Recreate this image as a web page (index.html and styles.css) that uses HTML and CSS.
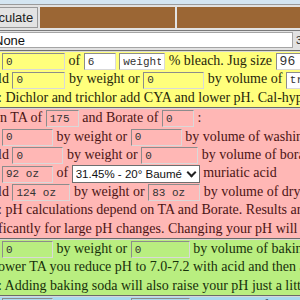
FILE: index.html
```html
<!DOCTYPE html>
<html lang="en">
<head>
<meta charset="UTF-8">
<title>Pool chemical calculator</title>
<link rel="stylesheet" href="styles.css">
</head>
<body>
<div class="page">
    <div class="strip"></div>

    <!-- 按钮和棕色标题栏 -->
    <div class="bar">
        <button class="calc">Calculate</button>
        <div class="brown first"></div>
        <div class="brown"></div>
    </div>

    <div class="pick">
        <select class="treat"><option>None</option></select>
        <span class="more">3</span>
    </div>

    <!-- 氯 -->
    <div class="sec yellow">
        <div class="line pad"><input class="w63" value="0"> of <input class="w32 white" value="6"> <select class="unit w46"><option>weight</option></select> % bleach. Jug size <input class="w40 white big" value="96 oz"></div>
        <div class="line cut">ld <input class="w53" value="0"> by weight or <input class="w61" value="0"> by volume of <select class="unit w60"><option>trichlor</option></select></div>
        <div class="line cut">: Dichlor and trichlor add CYA and lower pH. Cal-hypo adds calcium.</div>
    </div>

    <!-- TA / 硼 / pH -->
    <div class="sec pink">
        <div class="line">n TA of <input class="w33" value="175"> and Borate of <input class="w32" value="0"> :</div>
        <div class="line pad"><input class="w51" value="0"> by weight or <input class="w51" value="0"> by volume of washing soda</div>
        <div class="line cut">ld <input class="w51" value="0"> by weight or <input class="w57" value="0"> by volume of borax</div>
        <div class="line pad"><input class="w51" value="92 oz"> of <span class="drop"><select class="acid"><option>31.45% - 20° Baumé</option></select></span> muriatic acid</div>
        <div class="line cut">ld <input class="w58" value="124 oz"> by weight or <input class="w52" value="83 oz"> by volume of dry acid</div>
        <div class="line cut">: pH calculations depend on TA and Borate. Results are</div>
        <div class="line cut">ficantly for large pH changes. Changing your pH will affect</div>
    </div>

    <!-- 小苏打 -->
    <div class="sec green">
        <div class="line pad"><input class="w51" value="0"> by weight or <input class="w59" value="0"> by volume of baking soda</div>
        <div class="line cut">ower TA you reduce pH to 7.0-7.2 with acid and then aerate</div>
        <div class="line cut">: Adding baking soda will also raise your pH just a little.</div>
    </div>

    <div class="sec blue">
        <div class="line pad"><input class="w51" value="0"> by weight or <input class="w59" value="0"> by volume of calcium</div>
    </div>
</div>
</body>
</html>
```

FILE: styles.css
```css
/* 页面基础 */
* {
    box-sizing: border-box;
}

body {
    margin: 0;
    background: #e6e6e6;
    overflow: hidden;
    font-family: "Liberation Serif", "Times New Roman", serif;
    font-size: 14px;
}

.page {
    width: 300px;
    overflow: hidden;
}

.strip {
    height: 5px;
    background: #d4e5f1;
    border-bottom: 1px solid #9a9a9a;
}

/* 标题栏 */
.bar {
    display: flex;
    gap: 2px;
    padding: 2px 0 2px;
    background: #e2e2e2;
    border-bottom: 1px solid #7a7a7a;
}

.calc {
    margin-left: -26px;
    width: 64px;
    height: 21px;
    padding: 0 4px;
    font-family: "Liberation Sans", Arial, sans-serif;
    font-size: 13px;
    color: #222;
    background: #e3e3e3;
    border: 1px solid #9a9a9a;
    text-align: right;
}

.brown {
    flex: 1;
    background: #9b6634;
}

.brown.first {
    flex: 0 0 135px;
}

.pick {
    display: flex;
    align-items: center;
    gap: 3px;
    padding: 1px 0 2px;
    background: #e2e2e2;
    border-bottom: 1px solid #6f6f6f;
}

.treat {
    appearance: none;
    flex-shrink: 0;
    width: 303px;
    margin-left: -10px;
    height: 16px;
    padding: 0 3px;
    font-family: "Liberation Sans", Arial, sans-serif;
    font-size: 13px;
    color: #111;
    background: #fff;
    border: 1px solid #a5a5a5;
    border-radius: 0;
}

.more {
    flex-shrink: 0;
    font-family: "Liberation Sans", Arial, sans-serif;
    font-size: 11px;
    color: #333;
}

/* 各个区块 */
.sec {
    border-top: 1px solid #d8d8d8;
    border-bottom: 1px solid #6a6a6a;
}

.yellow {
    background: #ffff7c;
    color: #26260a;
}

.pink {
    background: #ffb7b5;
    color: #4c1414;
}

.green {
    background: #b9ee80;
    color: #17300a;
}

.blue {
    background: #a9d9ef;
    color: #10283a;
}

.line {
    height: 18.4px;
    line-height: 18.4px;
    white-space: nowrap;
}

.line.pad {
    padding-left: 2px;
}

.line.cut {
    text-indent: -2px;
}

.line input,
.line select {
    height: 17px;
    padding: 0 3px;
    vertical-align: middle;
    font-family: "Liberation Mono", "Courier New", monospace;
    font-size: 11px;
    color: #333;
    background: transparent;
    border: 1px solid;
    border-color: #8c8c8c #d9d9d9 #d9d9d9 #8c8c8c;
    border-radius: 0;
    text-indent: 0;
}

.line .white,
.line .unit {
    background: #fff;
}

.line .big {
    font-size: 13px;
}

.unit {
    appearance: none;
}

/* 带箭头的下拉框 */
.drop {
    position: relative;
    display: inline-block;
    vertical-align: middle;
    text-indent: 0;
    line-height: 0;
}

.drop::after {
    content: "";
    position: absolute;
    right: 5px;
    top: 4px;
    width: 5px;
    height: 5px;
    border-right: 2px solid #222;
    border-bottom: 2px solid #222;
    transform: rotate(45deg);
    pointer-events: none;
}

.line .acid {
    appearance: none;
    width: 128px;
    height: 18px;
    padding: 0 2px 0 3px;
    vertical-align: top;
    font-family: "Liberation Sans", Arial, sans-serif;
    font-size: 11.5px;
    color: #111;
    background: #fff;
    border: 1px solid #6e6e6e;
}

.w32 { width: 32px; }
.w33 { width: 33px; }
.w40 { width: 40px; }
.w46 { width: 46px; }
.w51 { width: 51px; }
.w52 { width: 52px; }
.w53 { width: 53px; }
.w57 { width: 57px; }
.w58 { width: 58px; }
.w59 { width: 59px; }
.w60 { width: 60px; }
.w61 { width: 61px; }
.w63 { width: 63px; }
```
